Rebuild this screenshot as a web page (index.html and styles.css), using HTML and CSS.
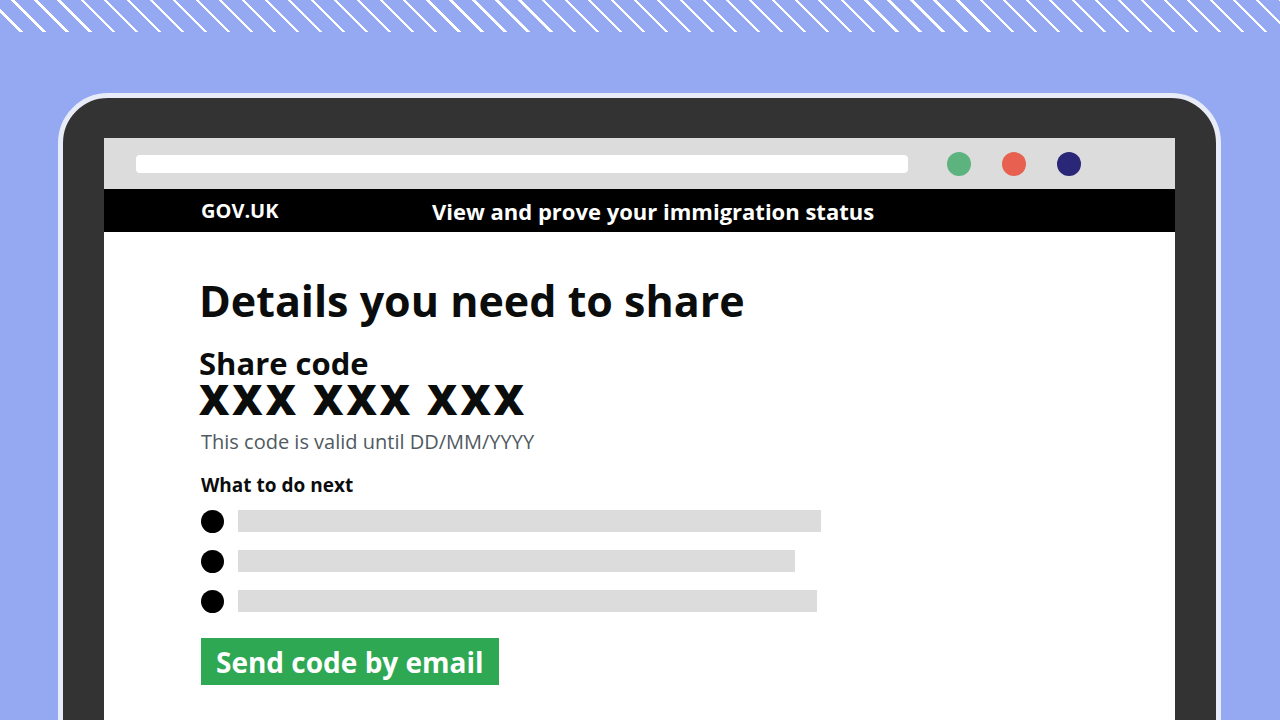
FILE: index.html
```html
<!DOCTYPE html>
<html lang="en">
<head>
<meta charset="UTF-8">
<title>View and prove your immigration status</title>
<link rel="stylesheet" href="styles.css">
</head>
<body>

<div class="stripes"></div>

<div class="laptop">
    <div class="screen">

        <div class="browser-bar">
            <div class="url-bar"></div>
            <span class="dot green"></span>
            <span class="dot red"></span>
            <span class="dot navy"></span>
        </div>

        <header class="gov-header">
            <span class="logo">GOV.UK</span>
            <span class="service">View and prove your immigration status</span>
        </header>

        <main class="content">
            <h1>Details you need to share</h1>
            <h2>Share code</h2>
            <div class="code">XXX XXX XXX</div>
            <p class="hint">This code is valid until DD/MM/YYYY</p>

            <h3>What to do next</h3>
            <ul class="steps">
                <li><span class="bar" style="width:583px"></span></li>
                <li><span class="bar" style="width:557px"></span></li>
                <li><span class="bar" style="width:579px"></span></li>
            </ul>

            <button class="send">Send code by email</button>
        </main>

    </div>
</div>

</body>
</html>
```

FILE: styles.css
```css
*{
    margin:0;
    padding:0;
    box-sizing:border-box;
}

body{
    background:#95a8f2;
    font-family:"Open Sans",Lato,sans-serif;
    height:720px;
    overflow:hidden;
}

.stripes{
    height:32px;
    background:repeating-linear-gradient(45deg,#95a8f2 0,#95a8f2 14px,#ffffff 14px,#ffffff 16.3px);
}

.laptop{
    margin:61px 0 0 58px;
    width:1163px;
    height:700px;
    background:#333333;
    border:5px solid #e8ecf8;
    border-radius:50px;
    padding:40px 41px 0 41px;
}

.screen{
    background:white;
    height:100%;
}

.browser-bar{
    height:51px;
    background:#dcdcdc;
    display:flex;
    align-items:center;
    padding-left:32px;
}

.url-bar{
    flex-shrink:0;
    width:772px;
    height:18px;
    background:white;
    border-radius:4px;
    margin-right:39px;
}

.dot{
    flex-shrink:0;
    width:24px;
    height:24px;
    border-radius:50%;
    margin-right:31px;
}

.green{ background:#5db37e; }
.red{ background:#e8604f; }
.navy{ background:#2a2678; }

.gov-header{
    height:43px;
    background:black;
    color:white;
    display:flex;
    align-items:center;
    padding-left:97px;
    font-weight:700;
}

.logo{
    font-size:20px;
    width:231px;
}

.service{
    font-size:22px;
}

.content{
    padding:43px 0 0 95px;
    color:#0b0c0c;
}

h1{
    font-size:43px;
    line-height:52px;
    font-weight:700;
}

h2{
    margin-top:19px;
    font-size:31px;
    line-height:34px;
}

.code{
    font-size:42px;
    line-height:38px;
    font-weight:800;
    letter-spacing:3px;
}

.hint{
    margin-top:11px;
    font-size:20px;
    line-height:26px;
    color:#505a5f;
    padding-left:2px;
}

h3{
    margin-top:18px;
    font-size:19px;
    line-height:24px;
    padding-left:2px;
}

.steps{
    list-style:none;
    margin-top:4px;
    padding-left:2px;
}

.steps li{
    display:flex;
    align-items:center;
    gap:14px;
    height:40px;
}

.steps li:before{
    content:"";
    width:23px;
    height:23px;
    border-radius:50%;
    background:black;
}

.bar{
    height:22px;
    background:#dcdcdc;
}

.send{
    margin:17px 0 0 2px;
    background:#2ea853;
    color:white;
    border:none;
    font-family:inherit;
    font-size:28px;
    font-weight:700;
    padding:0 15px;
    height:47px;
}
```
